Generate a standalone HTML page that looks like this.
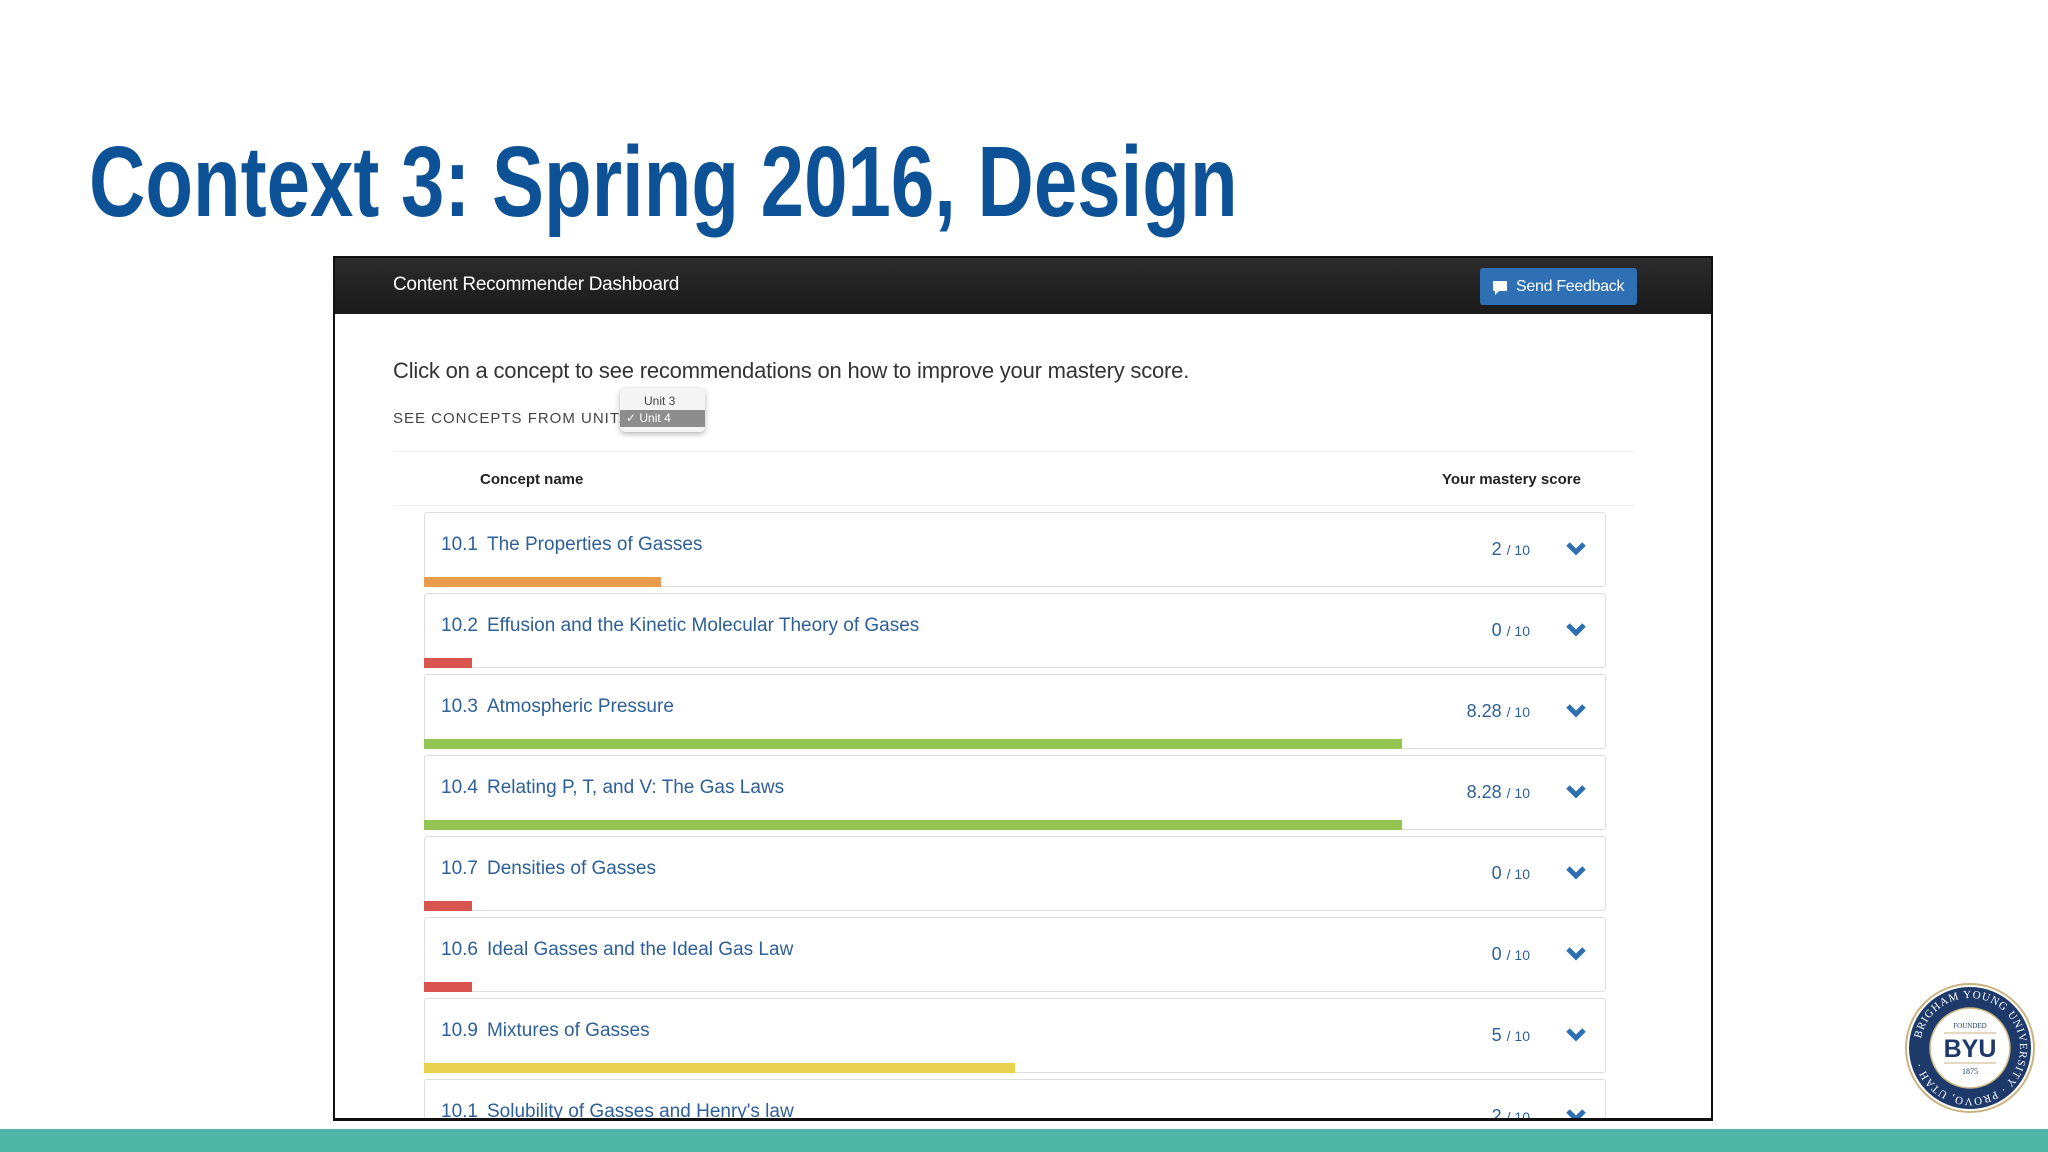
<!DOCTYPE html>
<html><head><meta charset="utf-8"><style>
*{margin:0;padding:0;box-sizing:border-box}
body{width:2048px;height:1152px;background:#fff;position:relative;overflow:hidden;font-family:"Liberation Sans",sans-serif}
.title{position:absolute;left:89px;top:127px;font-family:"Liberation Sans Narrow","Liberation Sans",sans-serif;font-stretch:condensed;font-weight:bold;font-size:100px;line-height:110px;color:#0d5296;white-space:nowrap;transform-origin:0 0;transform:scaleX(0.78)}
.frame{position:absolute;left:333px;top:256px;width:1380px;height:865px;border:2px solid #111;border-bottom-width:3px;overflow:hidden;background:#fff}
.hdr{position:absolute;left:0;top:0;right:0;height:56px;background:linear-gradient(#2c2c2c,#1a1a1a)}
.hdr .t{position:absolute;left:58px;top:16px;color:#fff;font-size:19px;letter-spacing:-0.3px}
.btn{position:absolute;left:1145px;top:10px;width:157px;height:37px;background:#2f6fb3;border-radius:3px;color:#fff;font-size:16px;line-height:37px;padding-left:36px;letter-spacing:-0.3px}
.btn svg{position:absolute;left:12px;top:12px}
.intro{position:absolute;left:58px;top:100px;font-size:22px;color:#333;letter-spacing:-0.2px}
.see{position:absolute;left:58px;top:152px;font-size:15px;letter-spacing:1px;color:#444}
.dd{position:absolute;left:285px;top:130px;width:85px;height:44px;background:#f4f4f4;border-radius:5px;box-shadow:0 2px 6px rgba(0,0,0,.3);font-size:12px;color:#444}
.dd .a{position:absolute;left:24px;top:6px}
.dd .b{position:absolute;left:0;top:22px;width:85px;height:17px;background:#8d8d8d;color:#fff;padding-left:6px;line-height:17px}
.ln{position:absolute;left:58px;width:1242px;height:1px;background:#eee}
.th{position:absolute;top:213px;font-size:15px;font-weight:bold;color:#222}
.row{position:absolute;left:89px;width:1182px;height:75px;border:1px solid #ddd;border-radius:3px;background:#fff}
.row .l{position:absolute;left:16px;top:21px;font-size:19px;color:#2d5f98}
.row .l span{margin-right:9px}
.row .s{position:absolute;right:75px;top:26px;font-size:18px;color:#2d5f98}
.row .s small{font-size:14px}
.row svg{position:absolute;right:19px;top:27px}
.row .bar{position:absolute;left:-1px;bottom:-1px;height:10px}
.teal{position:absolute;left:0;top:1129px;width:2048px;height:23px;background:#4fb5a6}
.logo{position:absolute;left:1904px;top:982px}
</style></head><body>
<div class="title">Context 3: Spring 2016, Design</div>
<div class="frame">
 <div class="hdr"><div class="t">Content Recommender Dashboard</div>
  <div class="btn"><svg width="16" height="16" viewBox="0 0 16 16"><path d="M1 1h14v10H7l-4 4v-4H1z" fill="#fff"/></svg>Send Feedback</div></div>
 <div class="intro">Click on a concept to see recommendations on how to improve your mastery score.</div>
 <div class="see">SEE CONCEPTS FROM UNIT:</div>
 <div class="dd"><div class="a">Unit 3</div><div class="b">✓ Unit 4</div></div>
 <div class="ln" style="top:193px"></div>
 <div class="th" style="left:145px">Concept name</div>
 <div class="th" style="left:1107px">Your mastery score</div>
 <div class="ln" style="top:247px"></div>

 <div class="row" style="top:254px"><div class="l"><span>10.1</span>The Properties of Gasses</div><div class="s">2 <small>/ 10</small></div><svg width="20" height="16" viewBox="0 0 20 16"><path d="M2 4l8 8 8-8" stroke="#2d6fb0" stroke-width="5" fill="none"/></svg><div class="bar" style="width:237px;background:#e99b4b"></div></div>
 <div class="row" style="top:335px"><div class="l"><span>10.2</span>Effusion and the Kinetic Molecular Theory of Gases</div><div class="s">0 <small>/ 10</small></div><svg width="20" height="16" viewBox="0 0 20 16"><path d="M2 4l8 8 8-8" stroke="#2d6fb0" stroke-width="5" fill="none"/></svg><div class="bar" style="width:48px;background:#d9534f"></div></div>
 <div class="row" style="top:416px"><div class="l"><span>10.3</span>Atmospheric Pressure</div><div class="s">8.28 <small>/ 10</small></div><svg width="20" height="16" viewBox="0 0 20 16"><path d="M2 4l8 8 8-8" stroke="#2d6fb0" stroke-width="5" fill="none"/></svg><div class="bar" style="width:978px;background:#93c553"></div></div>
 <div class="row" style="top:497px"><div class="l"><span>10.4</span>Relating P, T, and V: The Gas Laws</div><div class="s">8.28 <small>/ 10</small></div><svg width="20" height="16" viewBox="0 0 20 16"><path d="M2 4l8 8 8-8" stroke="#2d6fb0" stroke-width="5" fill="none"/></svg><div class="bar" style="width:978px;background:#93c553"></div></div>
 <div class="row" style="top:578px"><div class="l"><span>10.7</span>Densities of Gasses</div><div class="s">0 <small>/ 10</small></div><svg width="20" height="16" viewBox="0 0 20 16"><path d="M2 4l8 8 8-8" stroke="#2d6fb0" stroke-width="5" fill="none"/></svg><div class="bar" style="width:48px;background:#d9534f"></div></div>
 <div class="row" style="top:659px"><div class="l"><span>10.6</span>Ideal Gasses and the Ideal Gas Law</div><div class="s">0 <small>/ 10</small></div><svg width="20" height="16" viewBox="0 0 20 16"><path d="M2 4l8 8 8-8" stroke="#2d6fb0" stroke-width="5" fill="none"/></svg><div class="bar" style="width:48px;background:#d9534f"></div></div>
 <div class="row" style="top:740px"><div class="l"><span>10.9</span>Mixtures of Gasses</div><div class="s">5 <small>/ 10</small></div><svg width="20" height="16" viewBox="0 0 20 16"><path d="M2 4l8 8 8-8" stroke="#2d6fb0" stroke-width="5" fill="none"/></svg><div class="bar" style="width:591px;background:#e8d24d"></div></div>
 <div class="row" style="top:821px"><div class="l"><span>10.1</span>Solubility of Gasses and Henry's law</div><div class="s">2 <small>/ 10</small></div><svg width="20" height="16" viewBox="0 0 20 16"><path d="M2 4l8 8 8-8" stroke="#2d6fb0" stroke-width="5" fill="none"/></svg></div>
</div>
<div class="teal"></div>
<svg class="logo" width="132" height="132" viewBox="0 0 132 132">
 <circle cx="66" cy="66" r="64" fill="#fff" stroke="#c9b37e" stroke-width="2"/>
 <circle cx="66" cy="66" r="61" fill="#1d3a6b"/>
 <circle cx="66" cy="66" r="40" fill="#fff" stroke="#c9b37e" stroke-width="1.5"/>
 <defs><path id="c" d="M66 66 m-50 0 a50 50 0 1 1 100 0 a50 50 0 1 1 -100 0"/></defs>
 <text font-family="Liberation Serif,serif" font-size="11" fill="#fff" letter-spacing="1"><textPath href="#c" startOffset="3%">BRIGHAM YOUNG UNIVERSITY · PROVO, UTAH ·</textPath></text>
 <text x="66" y="46" text-anchor="middle" font-family="Liberation Serif,serif" font-size="7" fill="#1d3a6b">FOUNDED</text>
 <line x1="40" y1="51" x2="92" y2="51" stroke="#c9b37e"/>
 <text x="66" y="75" text-anchor="middle" font-family="Liberation Sans,sans-serif" font-weight="bold" font-size="25" fill="#1d3a6b">BYU</text>
 <line x1="40" y1="81" x2="92" y2="81" stroke="#c9b37e"/>
 <text x="66" y="92" text-anchor="middle" font-family="Liberation Serif,serif" font-size="8" fill="#1d3a6b">1875</text>
</svg>
</body></html>
